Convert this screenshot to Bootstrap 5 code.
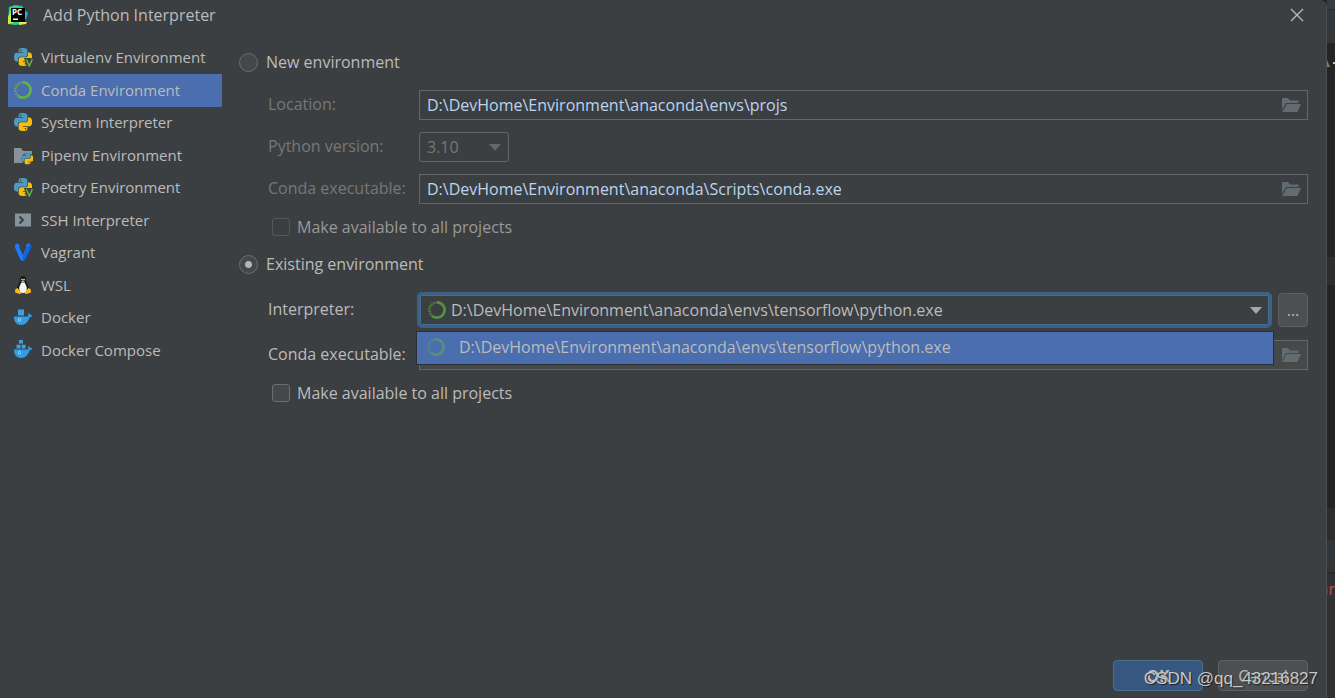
<!DOCTYPE html>
<html lang="en">
<head>
<meta charset="utf-8">
<meta name="viewport" content="width=device-width, initial-scale=1">
<title>Add Python Interpreter</title>
<link href="https://cdn.jsdelivr.net/npm/bootstrap@5.3.0/dist/css/bootstrap.min.css" rel="stylesheet">
<style>
  :root { --panel: #3c3f41; --line: #646668; --ink: #bbbbbb; --muted: #777777; --sel: #4b6eaf; }
  body { background: #262626; color: var(--ink); font: 16px/20px "Open Sans", "Noto Sans", sans-serif; }
  .dialog-pane { background: var(--panel); border-right: 1px solid #4c4f51; border-top-right-radius: 8px; min-width: 0; }
  .title-row { height: 31px; padding: 0 20px 2px 7px; gap: 14px; }
  .icon-btn { background: none; border: 0; padding: 0; line-height: 0; color: inherit; }
  .env-nav { width: 214px; margin: 11px 0 0 8px; font-size: 15px; }
  .env-nav a { height: 32px; padding: 0 0 2px 5px; gap: 8px; color: var(--ink); text-decoration: none; white-space: nowrap; }
  .env-nav a:nth-child(even) { height: 33px; }
  .env-nav a.active { background: var(--sel); }
  .env-nav svg { width: 20px; height: 20px; flex: none; }
  .form-pane { padding: 16px 18px 0 17px; min-width: 0; }
  .opt-row { height: 30px; gap: 8px; }
  .opt-row label, .check-row label { padding-bottom: 1px; }
  .sub { padding: 1px 0 0 29px; }
  .field-row { min-height: 30px; margin-top: 12px; }
  .field-row > label { width: 151px; flex: none; white-space: nowrap; padding-bottom: 2px; }
  .check-row { padding-left: 33px; height: 28px; gap: 7px; margin-top: 9px; }
  .muted { color: var(--muted); }
  .form-check-input { margin: 0; background-color: #43494a; border: 1px solid #6b6d6f; flex: none; float: none; }
  .form-check-input[type=radio] { width: 19px; height: 19px; }
  .form-check-input[type=checkbox] { width: 18px; height: 18px; border-radius: 3px; }
  .form-check-input:disabled { background-color: var(--panel); border-color: #55585a; opacity: 1; }
  .form-check-input:checked[type=radio] { background-color: #43494a; border-color: #6b6d6f; background-image: radial-gradient(circle, #b4b4b4 3px, transparent 4px); }
  .form-check-input:disabled ~ label { opacity: 1; color: #999999; }
  .path-box { height: 30px; border: 1px solid var(--line); padding-right: 6px; min-width: 0; }
  .path-box input { background: none; border: 0; outline: 0; color: #bcd4ee; padding: 0 0 1px 7px; min-width: 0; height: 28px; line-height: 20px; }
  .path-box.filled { background: #45494a; }
  .ver-select { width: 90px; height: 30px; background: none; color: var(--muted); border: 1px solid var(--line); border-radius: 3px; padding: 0 7px; appearance: none; opacity: 1; }
  .arrow { position: absolute; right: 8px; top: 50%; transform: translateY(-50%); pointer-events: none; }
  .combo { margin-left: -2px; }
  .combo .arrow { right: 10px; }
  .combo select { height: 36px; background: var(--panel); border: 3px solid #3d6185; box-shadow: inset 0 0 0 1px #466d94; border-radius: 5px; color: var(--ink); padding: 0 31px; appearance: none; outline: 0; }
  .combo .lead-icon { position: absolute; left: 10px; top: 8px; opacity: .7; pointer-events: none; }
  .popup { position: absolute; top: 39px; left: -1px; right: -2px; z-index: 5; border: 1px solid #2c2f31; }
  .popup button { height: 32px; background: var(--sel); color: var(--ink); border: 0; padding: 0 0 2px 9px; gap: 13px; }
  .flat-btn { background: #4c5052; border: 1px solid #5e6060; border-radius: 4px; color: var(--ink); padding: 0; }
  .more-btn { width: 30px; height: 34px; margin-left: 6px; }
  .foot { padding: 0 18px 7px; gap: 15px; }
  .foot button { width: 90px; height: 31px; }
  .foot .ok { background: #365880; border-color: #4c708c; font-weight: 700; }
  .watermark { position: absolute; right: 8px; bottom: 8px; font: 17px/22px "Liberation Sans", sans-serif; color: #c8c8c8; text-shadow: 1px 1px 1px #222; white-space: nowrap; pointer-events: none; }
  .editor-edge { width: 8px; flex: none; overflow: hidden; }
  .edge-menu { height: 10px; background: #3a3d3f; border-bottom: 1px solid #2b2b2b; }
  .edge-top { height: 33px; background: #35383a; }
  .edge-code { height: 214px; padding-top: 14px; background: #252525; line-height: 0; }
  .edge-line { height: 28px; background: #2d2d2d; }
  .edge-rest { height: 223px; background: #242424; }
  .edge-tab { height: 32px; background: #2a2c2e; }
  .edge-tool { height: 34px; background: #333638; border-bottom: 2px solid #282828; }
  .edge-log { background: #2f3133; color: #c9474a; line-height: 30px; }
</style>
</head>
<body>
<svg width="0" height="0" class="position-absolute" aria-hidden="true">
  <defs>
    <symbol id="py" viewBox="0 0 24 24">
      <path fill="#4b9bc6" d="M14.25.18l.9.2.73.26.59.3.45.32.34.34.25.34.16.33.1.3.04.26.02.2-.01.13V8.5l-.05.63-.13.55-.21.46-.26.38-.3.31-.33.25-.35.19-.35.14-.33.1-.3.07-.26.04-.21.02H8.77l-.69.05-.59.14-.5.22-.41.27-.33.32-.27.35-.2.36-.15.37-.1.35-.07.32-.04.27-.02.21v3.06H3.17l-.21-.03-.28-.07-.32-.12-.35-.18-.36-.26-.36-.36-.35-.46-.32-.59-.28-.73-.21-.88-.14-1.05-.05-1.23.06-1.22.16-1.04.24-.87.32-.71.36-.57.4-.44.42-.33.42-.24.4-.16.36-.1.32-.05.24-.01h.16l.06.01h8.16v-.83H6.18l-.01-2.75-.02-.37.05-.34.11-.31.17-.28.25-.26.31-.23.38-.2.44-.18.51-.15.58-.12.64-.1.71-.06.77-.04.84-.02 1.27.05zm-6.3 1.98l-.23.33-.08.41.08.41.23.34.33.22.41.09.41-.09.33-.22.23-.34.08-.41-.08-.41-.23-.33-.33-.22-.41-.09-.41.09z"/>
      <path fill="#f2bf0c" d="M21.1 6.11l.28.06.32.12.35.18.36.27.36.35.35.47.32.59.28.73.21.88.14 1.04.05 1.23-.06 1.23-.16 1.04-.24.86-.32.71-.36.57-.4.45-.42.33-.42.24-.4.16-.36.09-.32.05-.24.02-.16-.01h-8.22v.82h5.84l.01 2.76.02.36-.05.34-.11.31-.17.29-.25.25-.31.24-.38.2-.44.17-.51.15-.58.13-.64.09-.71.07-.77.04-.84.01-1.27-.04-1.07-.14-.9-.2-.73-.25-.59-.3-.45-.33-.34-.34-.25-.34-.16-.33-.1-.3-.04-.25-.02-.2.01-.13v-5.34l.05-.64.13-.54.21-.46.26-.38.3-.32.33-.24.35-.2.35-.14.33-.1.3-.06.26-.04.21-.02.13-.01h5.84l.69-.05.59-.14.5-.21.41-.28.33-.32.27-.35.2-.36.15-.36.1-.35.07-.32.04-.28.02-.21V6.07h2.09l.14.01zm-6.47 14.25l-.23.33-.08.41.08.41.23.33.33.23.41.08.41-.08.33-.23.23-.33.08-.41-.08-.41-.23-.33-.33-.23-.41-.08-.41.08z"/>
    </symbol>
    <symbol id="pyv" viewBox="0 0 20 20">
      <use href="#py" x="1" y="1" width="18" height="18"/>
      <path d="M11 11h9v9h-6z" fill="#3c3f41"/>
      <path d="M13.300 12.200l3 6.800 3-6.800" fill="none" stroke="#62b543" stroke-width="1.500"/>
    </symbol>
    <symbol id="conda" viewBox="0 0 20 20">
      <path d="M10 2.400a7.600 7.600 0 1 1-4.800 13.500" fill="none" stroke="#62b543" stroke-width="2.600"/>
      <path d="M5.200 15.900A7.600 7.600 0 0 1 10 2.400" fill="none" stroke="#62b543" stroke-width="2.400" stroke-dasharray="1.300 1.100"/>
    </symbol>
    <symbol id="pipenv" viewBox="0 0 20 20">
      <path d="M1 3h7l2 3h9v12H1z" fill="#87939a"/>
      <circle cx="14.500" cy="13.800" r="6" fill="#3c3f41"/>
      <use href="#py" x="8.500" y="7.500" width="12" height="12"/>
    </symbol>
    <symbol id="ssh" viewBox="0 0 20 20">
      <path d="M2 3.500h16v13H2z" fill="#87939a"/>
      <path d="M6.500 6.500l3.500 3.500-3.500 3.500" fill="none" stroke="#3c3f41" stroke-width="2"/>
    </symbol>
    <symbol id="vagrant" viewBox="0 0 20 20">
      <path d="M14 3l2-1.500L18.200 3v2.500L12 17.800 10 19l-2-2 2-4.500 4-7z" fill="#1159cc"/>
      <path d="M2 3l2-1.500L6.500 3v2.500l3.500 8 3-8V3l2-1.500h2L12 15.500 10 19l-2.500-1.200L2 5.500z" fill="#1c7bff"/>
      <path d="M13.500 5l4.500-2.500v3L12 17.800 10 19v-5z" fill="#1463de"/>
    </symbol>
    <symbol id="tux" viewBox="0 0 20 20">
      <path d="M10 1c-2.200 0-3 1.600-2.900 3.800.1 2-.7 2.600-1.700 4.700-1 2-1.900 3.500-1.400 6.500h12c.5-3-.4-4.500-1.400-6.500-1-2.100-1.700-2.700-1.600-4.700C13.100 2.600 12.200 1 10 1z" fill="#17191b"/>
      <path d="M8.200 7.500h3.600c.5 2.300 2.200 3.500 2 6.500-.2 2.800-1.500 4-3.800 4s-3.600-1.200-3.800-4c-.2-3 1.500-4.200 2-6.500z" fill="#f5f5f5"/>
      <circle cx="9" cy="4.600" r=".8" fill="#eee"/><circle cx="11" cy="4.600" r=".8" fill="#eee"/>
      <path d="M8.200 6.200L10 5.400l1.800.8L10 7.700z" fill="#f3b416"/>
      <path d="M4.500 13l3.600 4.300c.5 1.200-.4 1.900-1.500 1.600L2 17.600l.3-3.400zM15.500 13l-3.600 4.300c-.5 1.200.4 1.900 1.500 1.600l4.600-1.300-.3-3.400z" fill="#f5bd14"/>
    </symbol>
    <symbol id="hull" viewBox="0 0 20 20">
      <path d="M1 9.500h14.200c.3-.9.200-1.600-.2-2.500l.8-.8c.9.400 1.300 1 1.500 1.900.8-.1 1.500 0 2 .4-.4 1.200-1.400 1.800-2.700 1.800-1.300 4.500-4.200 7.700-8.600 7.700-4.800 0-7.200-3.800-7-8.500z" fill="#2e9fe6"/>
      <ellipse cx="6.500" cy="12.800" rx="1.200" ry="1.600" fill="#2e9fe6" stroke="#b9d9ee" stroke-width=".8"/>
    </symbol>
    <symbol id="docker" viewBox="0 0 20 20"><path d="M5 2.500h6v6H5z" fill="#3f9fe0"/><use href="#hull" width="20" height="20"/></symbol>
    <symbol id="compose" viewBox="0 0 20 20"><path d="M6 0h4v3.500H6zM3.500 4.800h4v3.800h-4zM8.600 4.800h4v3.800h-4z" fill="#3f9fe0"/><use href="#hull" width="20" height="20"/></symbol>
    <symbol id="folder" viewBox="0 0 20 16">
      <path d="M1 1h6l2 2.500h8.500V6H5L1 13z" fill="#626b6f"/>
      <path d="M5.600 7H20l-3.600 8H1.200z" fill="#626b6f"/>
    </symbol>
  </defs>
</svg>

<div class="d-flex min-vh-100">
  <div class="dialog-pane position-relative flex-grow-1 d-flex flex-column">
    <header class="title-row d-flex align-items-center">
      <svg width="22" height="22" viewBox="0 0 22 22" aria-hidden="true">
        <path d="M2 3l6-2 7 1 4 5-3 13-8 1-7-1z" fill="#21d789"/>
        <path d="M1 13l4-9 1 15-5 1z" fill="#c5ee3f"/>
        <path d="M17 6l4 3-2 6-2 2z" fill="#12b8f0"/>
        <path d="M12 18h8l-1 2-7 1z" fill="#e6ee4a"/>
        <path d="M4 4h14v14H4z" fill="#000"/>
        <text x="5" y="11" font-family="Open Sans, sans-serif" font-size="8" font-weight="700" fill="#fff">PC</text>
        <path d="M6 14.500h5V16H6z" fill="#fff"/>
      </svg>
      <span>Add Python Interpreter</span>
      <button class="icon-btn ms-auto" type="button" aria-label="Close">
        <svg width="18" height="18" viewBox="0 0 18 18"><path d="M3 3l12 12M15 3L3 15" stroke="#bbb" stroke-width="1.300"/></svg>
      </button>
    </header>

    <div class="d-flex flex-grow-1">
      <nav class="env-nav flex-shrink-0" aria-label="Interpreter types">
        <a class="d-flex align-items-center" href="#"><svg><use href="#pyv"/></svg>Virtualenv Environment</a>
        <a class="d-flex align-items-center active" href="#" aria-current="page"><svg><use href="#conda"/></svg>Conda Environment</a>
        <a class="d-flex align-items-center" href="#"><svg><use href="#py" x="1" y="1" width="18" height="18"/></svg>System Interpreter</a>
        <a class="d-flex align-items-center" href="#"><svg><use href="#pipenv"/></svg>Pipenv Environment</a>
        <a class="d-flex align-items-center" href="#"><svg><use href="#pyv"/></svg>Poetry Environment</a>
        <a class="d-flex align-items-center" href="#"><svg><use href="#ssh"/></svg>SSH Interpreter</a>
        <a class="d-flex align-items-center" href="#"><svg><use href="#vagrant"/></svg>Vagrant</a>
        <a class="d-flex align-items-center" href="#"><svg><use href="#tux"/></svg>WSL</a>
        <a class="d-flex align-items-center" href="#"><svg><use href="#docker"/></svg>Docker</a>
        <a class="d-flex align-items-center" href="#"><svg><use href="#compose"/></svg>Docker Compose</a>
      </nav>

      <form class="form-pane flex-grow-1">
        <div class="opt-row d-flex align-items-center">
          <input class="form-check-input" type="radio" name="env" id="envNew">
          <label for="envNew">New environment</label>
        </div>
        <div class="sub">
          <div class="field-row d-flex align-items-center">
            <label class="muted" for="loc">Location:</label>
            <div class="path-box flex-grow-1 d-flex align-items-center">
              <input class="flex-grow-1" id="loc" type="text" value="D:\DevHome\Environment\anaconda\envs\projs">
              <button class="icon-btn" type="button" aria-label="Browse location"><svg width="20" height="16"><use href="#folder"/></svg></button>
            </div>
          </div>
          <div class="field-row d-flex align-items-center">
            <label class="muted" for="ver">Python version:</label>
            <div class="position-relative">
              <select class="ver-select" id="ver" disabled><option>3.10</option></select>
              <svg class="arrow" width="12" height="8"><path d="M0 1h12L6 8z" fill="#646668"/></svg>
            </div>
          </div>
          <div class="field-row d-flex align-items-center">
            <label class="muted" for="exe1">Conda executable:</label>
            <div class="path-box flex-grow-1 d-flex align-items-center">
              <input class="flex-grow-1" id="exe1" type="text" value="D:\DevHome\Environment\anaconda\Scripts\conda.exe">
              <button class="icon-btn" type="button" aria-label="Browse conda executable"><svg width="20" height="16"><use href="#folder"/></svg></button>
            </div>
          </div>
        </div>
        <div class="check-row d-flex align-items-center">
          <input class="form-check-input" type="checkbox" id="all1" disabled>
          <label for="all1">Make available to all projects</label>
        </div>
        <div class="opt-row d-flex align-items-center mt-2">
          <input class="form-check-input" type="radio" name="env" id="envOld" checked>
          <label for="envOld">Existing environment</label>
        </div>
        <div class="sub">
          <div class="field-row d-flex align-items-center">
            <label for="interp">Interpreter:</label>
            <div class="combo position-relative flex-grow-1">
              <select class="w-100 d-block" id="interp"><option>D:\DevHome\Environment\anaconda\envs\tensorflow\python.exe</option></select>
              <svg class="lead-icon" width="20" height="20"><use href="#conda"/></svg>
              <svg class="arrow" width="12" height="8"><path d="M0 1h12L6 8z" fill="#a4a6a8"/></svg>
              <div class="popup" role="listbox" aria-label="Interpreters">
                <button class="w-100 d-flex align-items-center" type="button" role="option" aria-selected="true"><svg width="20" height="20" opacity=".5"><use href="#conda"/></svg>D:\DevHome\Environment\anaconda\envs\tensorflow\python.exe</button>
              </div>
            </div>
            <button class="flat-btn more-btn" type="button" aria-label="More interpreters">...</button>
          </div>
          <div class="field-row d-flex align-items-center">
            <label for="exe2">Conda executable:</label>
            <div class="path-box filled flex-grow-1 d-flex align-items-center">
              <input class="flex-grow-1" id="exe2" type="text">
              <button class="icon-btn" type="button" aria-label="Browse conda executable"><svg width="20" height="16"><use href="#folder"/></svg></button>
            </div>
          </div>
        </div>
        <div class="check-row d-flex align-items-center">
          <input class="form-check-input" type="checkbox" id="all2">
          <label for="all2">Make available to all projects</label>
        </div>
      </form>
    </div>

    <footer class="foot d-flex justify-content-end">
      <button class="flat-btn ok" type="button">OK</button>
      <button class="flat-btn" type="button">Cancel</button>
    </footer>
    <div class="watermark">CSDN @qq_43216827</div>
  </div>

  <div class="editor-edge d-flex flex-column" aria-hidden="true">
    <div class="edge-menu"></div>
    <div class="edge-top"></div>
    <div class="edge-code"><svg width="8" height="12"><path d="M0 3l3 7H0z" fill="#8a7a55"/><path d="M6 5h2v2H6z" fill="#a9cbe8"/></svg></div>
    <div class="edge-line"></div>
    <div class="edge-rest"></div>
    <div class="edge-tab"></div>
    <div class="edge-tool"></div>
    <div class="edge-log flex-grow-1 d-flex justify-content-end">ar</div>
  </div>
</div>
<script src="https://cdn.jsdelivr.net/npm/bootstrap@5.3.0/dist/js/bootstrap.bundle.min.js"></script>
</body>
</html>
